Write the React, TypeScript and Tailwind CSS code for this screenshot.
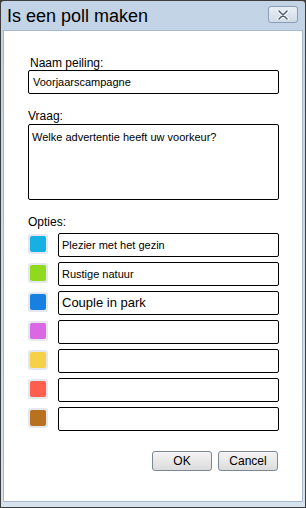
import React from 'react';

const swatches = [
  { color: 'bg-[#17b0e2]', text: 'Plezier met het gezin', size: 'text-[11px]' },
  { color: 'bg-[#8fda1f]', text: 'Rustige natuur', size: 'text-[11px]' },
  { color: 'bg-[#1880e0]', text: 'Couple in park', size: 'text-[13px]' },
  { color: 'bg-[#da68e2]', text: '', size: 'text-[11px]' },
  { color: 'bg-[#f5d148]', text: '', size: 'text-[11px]' },
  { color: 'bg-[#fd5f4e]', text: '', size: 'text-[11px]' },
  { color: 'bg-[#b8711f]', text: '', size: 'text-[11px]' },
];

export default function App() {
  return (
    <div className="w-[306px] h-[508px] bg-[#3d3d3d] p-px" style={{ fontFamily: '"Liberation Sans", Arial, sans-serif' }}>
      <div className="flex flex-col h-full bg-gradient-to-b from-[#c2d3e6] to-[#d6e2ee] rounded-t-[3px] px-[2px] pb-[5px]">
        {/* Title bar */}
        <div className="flex items-start justify-between h-[29px] pl-[4px] pr-[5px] pt-[4px]">
          <span className="text-[18px] leading-[22px] text-black">Is een poll maken</span>
          <div className="mt-[1px] w-[30px] h-[17px] rounded-[3px] border border-[#8d9db3] bg-gradient-to-b from-[#e8eef5] to-[#cfdbe8] flex items-center justify-center">
            <svg width="12" height="10" viewBox="0 0 12 10">
              <path d="M2 1l8 8M10 1L2 9" stroke="#ffffff" strokeWidth="3.5" strokeLinecap="round" />
              <path d="M2 1l8 8M10 1L2 9" stroke="#4f5e72" strokeWidth="1.6" strokeLinecap="round" />
            </svg>
          </div>
        </div>

        {/* Body */}
        <div className="flex-1 bg-white border border-[#a8b8cc] flex flex-col pl-[24px] pr-[23px] pt-[25px] text-black">
          <div className="text-[12px] leading-[14px] pl-[2px]">Naam peiling:</div>
          <div className="h-[24px] border border-black rounded-[2px] flex items-center px-[4px] text-[11px]">Voorjaarscampagne</div>

          <div className="mt-[15px] text-[12px] leading-[15px]">Vraag:</div>
          <div className="h-[76px] border border-black rounded-[2px] px-[3px] pt-[5px] text-[11px] leading-[14px]">Welke advertentie heeft uw voorkeur?</div>

          <div className="mt-[15px] text-[12px] leading-[14px]">Opties:</div>
          <div className="mt-[4px] flex flex-col gap-[5px]">
            {swatches.map((s, i) => (
              <div key={i} className="flex items-center">
                <div className="w-[20px] h-[20px] rounded-[3px] bg-[#e4e8ee] p-[2px] flex mb-[3px]">
                  <div className={`flex-1 rounded-[2px] ${s.color}`} />
                </div>
                <div className={`ml-[10px] flex-1 h-[24px] border border-black rounded-[2px] flex items-center px-[3px] ${s.size}`}>{s.text}</div>
              </div>
            ))}
          </div>

          <div className="mt-[20px] flex justify-end gap-[6px] pr-[1px]">
            <button className="w-[60px] h-[20px] rounded-[3px] border border-[#7b8797] bg-gradient-to-b from-[#f4f4f4] to-[#dcdcdc] text-[12px] leading-none">OK</button>
            <button className="w-[60px] h-[20px] rounded-[3px] border border-[#7b8797] bg-gradient-to-b from-[#f4f4f4] to-[#dcdcdc] text-[12px] leading-none">Cancel</button>
          </div>
        </div>
      </div>
    </div>
  );
}
